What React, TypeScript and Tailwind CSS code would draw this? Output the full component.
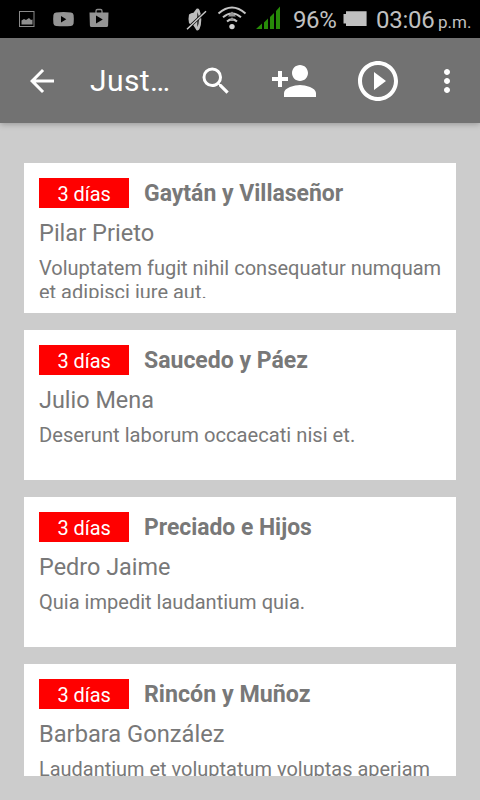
type Item = { company: string; person: string; note: string; titleClass: string; personClass: string; noteClass: string };

const items: Item[] = [
  { company: "Gaytán y Villaseñor", person: "Pilar Prieto", note: "Voluptatem fugit nihil consequatur numquam et adipisci iure aut.", titleClass: "scale-x-[0.957]", personClass: "scale-x-[0.983]", noteClass: "scale-x-[0.953]" },
  { company: "Saucedo y Páez", person: "Julio Mena", note: "Deserunt laborum occaecati nisi et.", titleClass: "scale-x-[0.959]", personClass: "scale-x-[0.976]", noteClass: "scale-x-[0.96]" },
  { company: "Preciado e Hijos", person: "Pedro Jaime", note: "Quia impedit laudantium quia.", titleClass: "scale-x-[0.953]", personClass: "scale-x-[0.976]", noteClass: "scale-x-[0.954]" },
  { company: "Rincón y Muñoz", person: "Barbara González", note: "Laudantium et voluptatum voluptas aperiam quia.", titleClass: "scale-x-[0.967]", personClass: "scale-x-[0.986]", noteClass: "scale-x-[0.95]" },
];

function MaterialIcon({ d, className }: { d: string; className: string }) {
  return (
    <svg viewBox="0 0 24 24" className={`shrink-0 fill-white ${className}`}>
      <path d={d} />
    </svg>
  );
}

function StatusBar() {
  return (
    <div className="flex h-[38px] shrink-0 items-start bg-black text-[#c0c0c0]">
      <svg width="110" height="38" viewBox="0 0 110 38" className="shrink-0">
        <rect x="19.5" y="11.5" width="14.5" height="15" fill="none" stroke="#8a8a8a" />
        <path d="M21.5 24.5v-4l2.5-1.5 2 1 3-2 2 2 1.5-.5v5z" fill="#8f8f8f" />
        <path fillRule="evenodd" d="M56 12.4q7.500-.8 15 0 2.300.2 2.600 2.500.5 4.300 0 8.500-.3 2.300-2.600 2.600-7.500.7-15 0-2.300-.3-2.600-2.600-.5-4.200 0-8.500.3-2.300 2.600-2.500zM61 16v6.400l5.300-3.200z" fill="#949494" />
        <path d="M96 13v-2q0-1.500 1.500-1.500h3q1.500 0 1.500 1.500v2" fill="none" stroke="#8a8a8a" strokeWidth="1.300" />
        <path fillRule="evenodd" d="M89.500 12.500h19l-.4 13q-.1 1.500-1.600 1.500h-15q-1.500 0-1.600-1.500zM96 15.500v8l6.800-4z" fill="#949494" />
      </svg>
      <svg width="123" height="38" viewBox="170 0 123 38" className="ml-[60px] shrink-0">
        <path d="M189 14.500q2-1.500 4.500-1.800l3-4q2-.7 3 1.300 1.800 4 1.800 9.500t-1.800 9.500q-1 2-3 1.300l-3.200-5q-3 0-4.300-2.300-1-4 0-8.500z" fill="#bcbcbc" />
        <path d="M197.300 12v15q1.600-3 1.600-7.500t-1.600-7.500z" fill="#111" />
        <path d="M186 30l20-18.800" stroke="#000" strokeWidth="2.900" />
        <path d="M187 29.300l19-18" stroke="#c8c8c8" strokeWidth="1.500" />
        <g fill="none" stroke="#c4c4c4" strokeWidth="2">
          <path d="M218.500 13.500q13.500-12 27 0" />
          <path d="M223 17.200q9-7.500 18 0" />
          <path d="M227 21.500q5-4.200 10 0" />
        </g>
        <path d="M232 11.500l4 5h-8zM232 17l2.500 4h-5z" fill="#969696" />
        <circle cx="232" cy="26.600" r="2.700" fill="#d4d4d4" />
        <path d="M256 29l6-5.500V29zM264 22.500l4-4V29h-4zM270 17l4-4V29h-4zM276 11l4-4.500V29h-4z" fill="#278b08" />
      </svg>
      <div className="mt-1.5 w-[50px] whitespace-nowrap text-[24px] leading-7 tracking-[-0.4px]">96%</div>
      <svg width="32" height="38" viewBox="343 0 32 38" className="shrink-0">
        <path d="M346 11.300h20.600V26H346v-2.500h-2.500v-9.500h2.500z" fill="#c0c0c0" />
      </svg>
      <div className="mt-1.5 ml-[1px] flex w-[104px] items-baseline whitespace-nowrap leading-7">
        <span className="w-[62px] text-[24px] tracking-[-0.25px]">03:06</span>
        <span className="text-[17px]">p.m.</span>
      </div>
    </div>
  );
}

function AppBar() {
  return (
    <header className="relative z-10 flex h-[85px] shrink-0 items-center bg-[#727272] pl-6 shadow-[0_1px_6px_rgba(0,0,0,0.28)]">
      <MaterialIcon className="size-9" d="M20 11H7.830l5.590-5.590L12 4l-8 8 8 8 1.410-1.410L7.830 13H20v-2z" />
      <h1 className="ml-[30px] w-[108px] whitespace-nowrap text-[30px] leading-9 tracking-[0.4px] text-white">Just…</h1>
      <MaterialIcon className="size-9" d="M15.500 14h-.79l-.28-.27A6.471 6.471 0 0 0 16 9.500 6.500 6.500 0 1 0 9.500 16c1.610 0 3.090-.59 4.230-1.570l.27.28v.79l5 4.990L20.490 19l-4.990-5zm-6 0C7.010 14 5 11.990 5 9.500S7.010 5 9.500 5 14 7.010 14 9.500 11.990 14 9.500 14z" />
      <MaterialIcon className="ml-9 size-12" d="M15 12c2.210 0 4-1.790 4-4s-1.790-4-4-4-4 1.790-4 4 1.790 4 4 4zm-9-2V7H4v3H1v2h3v3h2v-3h3v-2H6zm9 4c-2.670 0-8 1.340-8 4v2h16v-2c0-2.660-5.330-4-8-4z" />
      <MaterialIcon className="ml-9 size-12" d="M10 16.500l6-4.500-6-4.500v9zM12 2C6.480 2 2 6.480 2 12s4.480 10 10 10 10-4.480 10-10S17.520 2 12 2zm0 18c-4.410 0-8-3.590-8-8s3.590-8 8-8 8 3.590 8 8-3.590 8-8 8z" />
      <MaterialIcon className="ml-[27px] size-9" d="M12 8c1.100 0 2-.9 2-2s-.9-2-2-2-2 .9-2 2 .9 2 2 2zm0 2c-1.100 0-2 .9-2 2s.9 2 2 2 2-.9 2-2-.9-2-2-2zm0 6c-1.100 0-2 .9-2 2s.9 2 2 2 2-.9 2-2-.9-2-2-2z" />
    </header>
  );
}

function Card({ item }: { item: Item }) {
  return (
    <article className="h-[150px] shrink-0 bg-white p-[15px] text-[#787878]">
      <div className="flex h-full flex-col overflow-hidden">
        <div className="flex h-[30px] shrink-0 items-center gap-[15px]">
          <span className="flex h-[30px] w-[90px] items-center justify-center bg-[#ff0000] pt-0.5 text-[21px] leading-6 text-white">
            <span className="scale-x-[0.95]">3 días</span>
          </span>
          <h2 className={`origin-left whitespace-nowrap text-[24px] leading-7 font-bold ${item.titleClass}`}>{item.company}</h2>
        </div>
        <p className={`mt-[11px] h-7 shrink-0 origin-left whitespace-nowrap text-[24px] leading-7 ${item.personClass}`}>{item.person}</p>
        <p className={`mt-[9px] w-[424px] shrink-0 origin-left text-[21px] leading-6 ${item.noteClass}`}>{item.note}</p>
      </div>
    </article>
  );
}

export default function App() {
  return (
    <div className="flex h-[800px] w-[480px] flex-col overflow-hidden bg-[#cccccc] font-[Roboto,sans-serif]">
      <StatusBar />
      <AppBar />
      <main className="mx-6 mt-10 mb-6 flex min-h-0 flex-1 flex-col gap-[17px] overflow-hidden">
        {items.map((item) => (
          <Card key={item.company} item={item} />
        ))}
      </main>
    </div>
  );
}
